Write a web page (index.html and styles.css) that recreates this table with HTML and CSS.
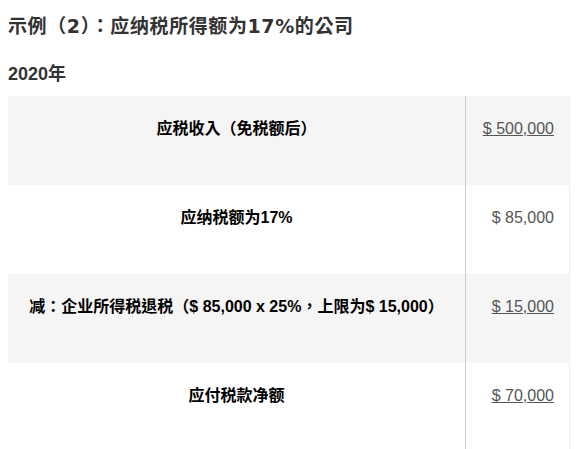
FILE: index.html
```html
<!DOCTYPE html>
<html lang="zh-Hant">
<head>
<meta charset="utf-8">
<title>示例（2）</title>
<link rel="stylesheet" href="styles.css">
</head>
<body>
<h3 class="title">示例（<span class="lat">2</span>）：应纳税所得额为<span class="lat">17%</span>的公司</h3>
<h4 class="year">2020年</h4>
<table class="tax">
  <tbody>
    <tr class="shade">
      <td class="label">应税收入（免税额后）</td>
      <td class="value"><a href="#">$ 500,000</a></td>
    </tr>
    <tr>
      <td class="label">应纳税额为17%</td>
      <td class="value">$ 85,000</td>
    </tr>
    <tr class="shade">
      <td class="label">减：企业所得税退税（$ 85,000 x 25%，上限为$ 15,000）</td>
      <td class="value"><a href="#">$ 15,000</a></td>
    </tr>
    <tr>
      <td class="label">应付税款净额</td>
      <td class="value"><a href="#">$ 70,000</a></td>
    </tr>
  </tbody>
</table>
</body>
</html>
```

FILE: styles.css
```css
html, body {
  margin: 0;
  padding: 0;
  background: #ffffff;
}

body {
  padding: 12px 8px 0 8px;
  font-family: "Liberation Sans", "Noto Sans CJK TC", Arial, sans-serif;
}

.title {
  margin: 0;
  font-family: "Noto Sans CJK TC", sans-serif;
  font-size: 19px;
  letter-spacing: 0.6px;
  line-height: 26px;
  font-weight: 700;
  color: #333333;
}

.title .lat {
  font-family: "DejaVu Sans", sans-serif;
}

.year {
  margin: 22px 0 0 0;
  font-size: 18px;
  line-height: 26px;
  font-weight: 700;
  color: #333333;
}

.tax {
  margin-top: 9px;
  width: 562px;
  border-collapse: collapse;
  border-spacing: 0;
  border-right: 1px solid #f0f0f0;
}

.tax tr {
  height: 89px;
  background: #ffffff;
}

.tax tr.shade {
  background: #f5f5f5;
}

.tax td {
  vertical-align: top;
  padding: 22px 0 0 0;
  font-size: 16px;
  line-height: 22px;
}

.label {
  text-align: center;
  font-weight: 700;
  color: #000000;
}

.value {
  width: 88px;
  text-align: right;
  padding-right: 15px !important;
  border-left: 1px solid #cccccc;
  color: #555555;
}

.value a {
  color: #555555;
  text-decoration: underline;
}
```
